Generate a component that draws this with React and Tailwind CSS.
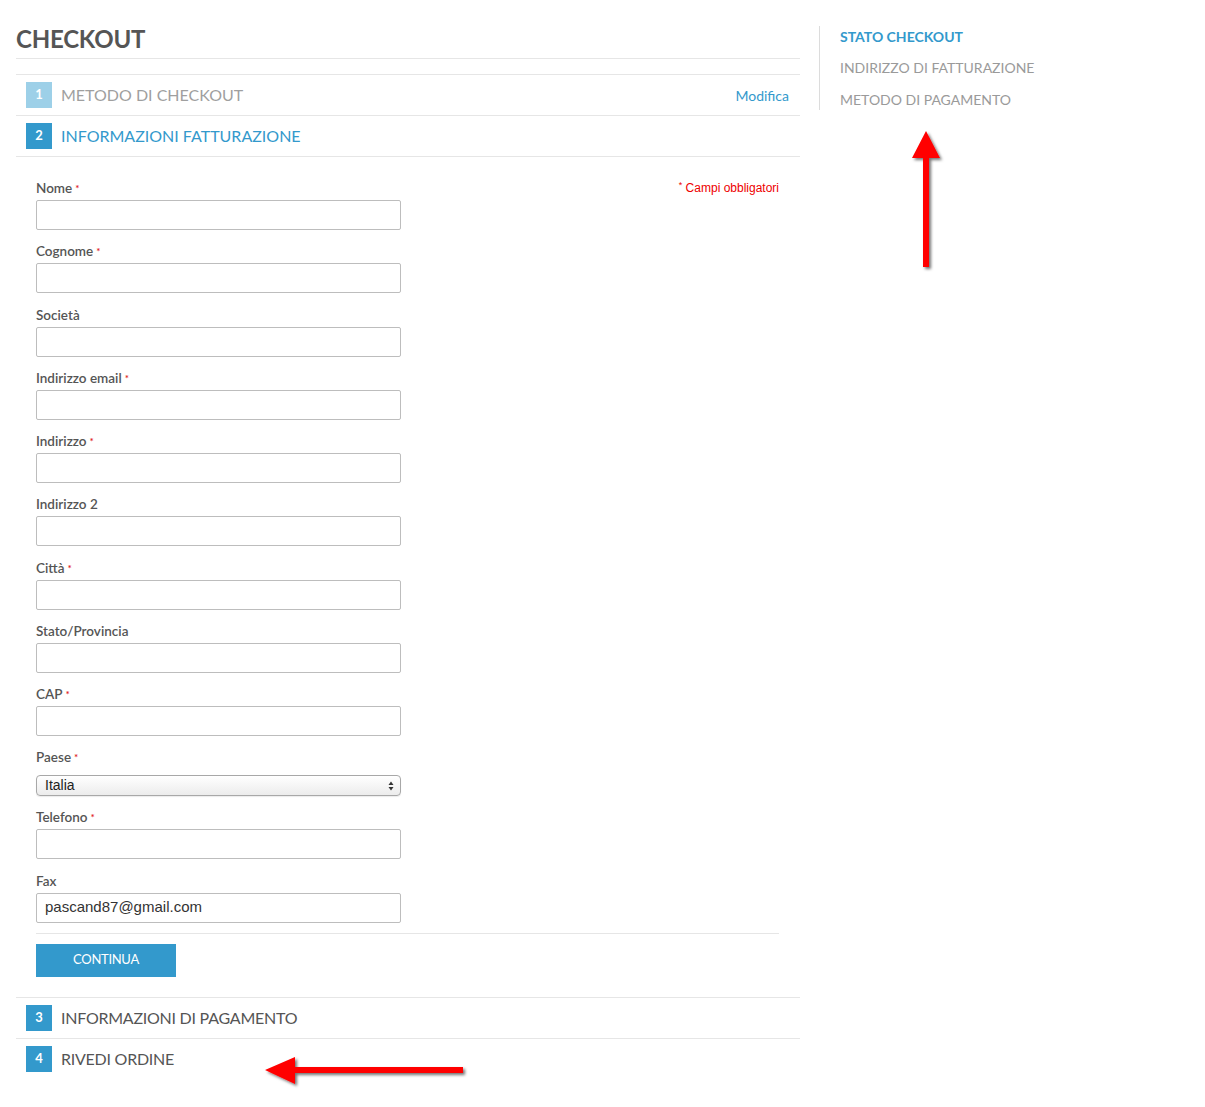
import React from 'react';

const fields = [
  { label: 'Nome', required: true },
  { label: 'Cognome', required: true },
  { label: 'Società' },
  { label: 'Indirizzo email', required: true },
  { label: 'Indirizzo', required: true },
  { label: 'Indirizzo 2' },
  { label: 'Città', required: true },
  { label: 'Stato/Provincia' },
  { label: 'CAP', required: true },
];

function StepRow({ num, title, state, action }) {
  const box = state === 'done' ? 'bg-[#9dd0e8]' : 'bg-[#3399cc]';
  const text =
    state === 'done'
      ? 'text-[#9f9f9f] tracking-[0px]'
      : state === 'active'
      ? 'text-[#3399cc] tracking-[0px]'
      : 'text-[#555] tracking-[-0.25px]';
  return (
    <div className="flex items-center pl-[10px] pr-[11px] py-[7px] border-t border-[#e6e6e6]">
      <div className={`w-[26px] h-[26px] ${box} flex items-center justify-center text-white text-[13px] font-bold`}>
        {num}
      </div>
      <div className={`ml-[9px] text-[16px] ${text}`}>{title}</div>
      {action && <a className="ml-auto text-[14px] text-[#3399cc]">{action}</a>}
    </div>
  );
}

function Label({ children, required }) {
  return (
    <div className="h-[18px] leading-[18px] text-[13.5px] font-semibold text-[#555] mb-[3px]">
      {children}
      {required && <span className="text-[#e02020] text-[10px] align-top ml-[3px]">*</span>}
    </div>
  );
}

function TextInput({ value }) {
  return (
    <div className="w-[365px] h-[30px] border border-[#bdbdbd] rounded-[2px] bg-white pl-[8px] flex items-center text-[15px] text-[#333] font-['Liberation_Sans',Arial,sans-serif]">
      {value}
    </div>
  );
}

function UpArrow() {
  return (
    <svg className="absolute left-[900px] top-[124px]" width="60" height="155" viewBox="0 0 60 155">
      <defs>
        <filter id="sh1" x="-50%" y="-20%" width="200%" height="140%">
          <feDropShadow dx="2" dy="2" stdDeviation="1.6" floodColor="#000" floodOpacity="0.55" />
        </filter>
      </defs>
      <g filter="url(#sh1)">
        <polygon points="26,7 40,34 29,34 29,143 23,143 23,34 12,34" fill="#ff0000" />
      </g>
    </svg>
  );
}

function LeftArrow() {
  return (
    <svg className="absolute left-[258px] top-[1051px]" width="220" height="44" viewBox="0 0 220 44">
      <defs>
        <filter id="sh2" x="-20%" y="-50%" width="140%" height="200%">
          <feDropShadow dx="2" dy="2" stdDeviation="1.6" floodColor="#000" floodOpacity="0.55" />
        </filter>
      </defs>
      <g filter="url(#sh2)">
        <polygon points="7,19 37,6 37,16 205,16 205,22 37,22 37,33" fill="#ff0000" />
      </g>
    </svg>
  );
}

export default function App() {
  return (
    <div className="relative w-[1205px] h-[1107px] bg-white font-['Lato','Open_Sans',sans-serif]">
      <div className="flex pl-4 pt-[24px]">
        <div className="w-[784px]">
          <h1 className="h-[35px] leading-[30px] text-[24px] font-bold text-[#555] tracking-[-0.2px] border-b border-[#e6e6e6]">
            CHECKOUT
          </h1>
          <div className="mt-[15px]">
            <StepRow num="1" title="METODO DI CHECKOUT" state="done" action="Modifica" />
            <StepRow num="2" title="INFORMAZIONI FATTURAZIONE" state="active" />
            <div className="border-t border-[#e6e6e6] pt-[22px] pl-5 pr-[21px] pb-[20px]">
              <div className="relative">
                <div className="absolute right-0 top-0 text-[12px] text-[#e00] font-['Liberation_Sans',Arial,sans-serif]">
                  <span className="text-[9px] align-top">*</span> Campi obbligatori
                </div>
                {fields.map((f) => (
                  <div key={f.label} className="mb-[12.25px]">
                    <Label required={f.required}>{f.label}</Label>
                    <TextInput />
                  </div>
                ))}
                <div className="mb-[12px]">
                  <Label required>Paese</Label>
                  <div className="w-[365px] h-[21px] mt-[9px] border border-[#a8a8a8] rounded-[4px] bg-gradient-to-b from-white to-[#ececec] flex items-center pl-[8px] pr-[6px] text-[14px] text-[#222] font-['Liberation_Sans',Arial,sans-serif] shadow-[0_1px_1px_rgba(0,0,0,0.08)]">
                    <span>Italia</span>
                    <svg className="ml-auto" width="6" height="10" viewBox="0 0 6 10">
                      <polygon points="3,0.5 5.5,4 0.5,4" fill="#333" />
                      <polygon points="3,9.5 5.5,6 0.5,6" fill="#333" />
                    </svg>
                  </div>
                </div>
                <div className="mb-[12.25px]">
                  <Label required>Telefono</Label>
                  <TextInput />
                </div>
                <div>
                  <Label>Fax</Label>
                  <TextInput value="pascand87@gmail.com" />
                </div>
                <div className="mt-[10px] border-t border-[#e6e6e6] pt-[10px]">
                  <button className="w-[140px] h-[33px] bg-[#3399cc] text-white text-[13px] tracking-[-0.3px]">
                    CONTINUA
                  </button>
                </div>
              </div>
            </div>
            <StepRow num="3" title="INFORMAZIONI DI PAGAMENTO" state="todo" />
            <StepRow num="4" title="RIVEDI ORDINE" state="todo" />
          </div>
        </div>
        <div className="ml-[19px] mt-[2px] h-[84px] border-l border-[#dcdcdc] pl-5 flex flex-col">
          <div className="text-[14px] font-bold text-[#3399cc] leading-[18px] mt-[2px]">STATO CHECKOUT</div>
          <div className="text-[14px] text-[#9a9a9a] leading-[18px] mt-[13px]">INDIRIZZO DI FATTURAZIONE</div>
          <div className="text-[14px] text-[#9a9a9a] leading-[18px] mt-[14px]">METODO DI PAGAMENTO</div>
        </div>
      </div>
      <UpArrow />
      <LeftArrow />
    </div>
  );
}
